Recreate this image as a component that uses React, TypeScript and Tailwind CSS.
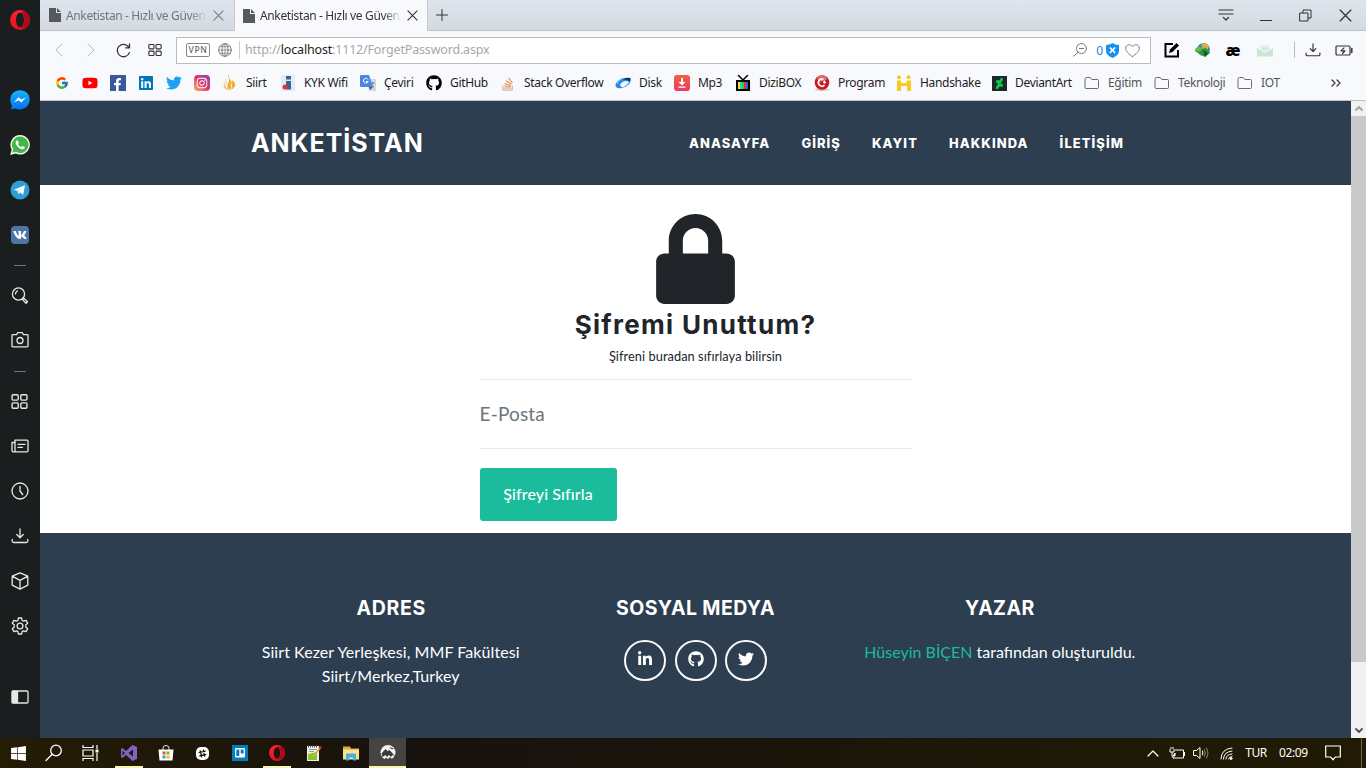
import type { ReactNode } from "react";
import { FcGoogle } from "react-icons/fc";
import {
  FaYoutube,
  FaFacebookF,
  FaTwitter,
  FaInstagram,
  FaGithub,
  FaLinkedinIn,
  FaLinkedin,
  FaLock,
  FaVk,
  FaDeviantart,
  FaWindows,
} from "react-icons/fa";

const stroke = { fill: "none", stroke: "currentColor", strokeLinecap: "round", strokeLinejoin: "round" } as const;

function OperaIcon({ className }: { className: string }) {
  return (
    <svg viewBox="0 0 20 20" className={className}>
      <defs>
        <linearGradient id="operaLeft" x1="0" y1="0" x2="0" y2="1">
          <stop offset="0" stopColor="#ff2338" />
          <stop offset="1" stopColor="#e0101f" />
        </linearGradient>
      </defs>
      <path fillRule="evenodd" fill="url(#operaLeft)" d="M10 0a10 10 0 1 0 0 20a10 10 0 0 0 0-20zm0 2.800c2.500 0 4 3.200 4 7.200s-1.500 7.200-4 7.200s-4-3.200-4-7.200s1.500-7.200 4-7.200z" />
      <path fill="#b0071c" d="M10.500 2.200c2-1 4-.9 6.200.4a10 10 0 0 1 0 14.800c-2.200 1.300-4.200 1.400-6.200.4c2.400-.5 3.800-3.600 3.800-7.800s-1.400-7.300-3.800-7.800z" />
    </svg>
  );
}

function GridIcon({ className, width = 1.3 }: { className: string; width?: number }) {
  return (
    <svg viewBox="0 0 16 16" className={className} {...stroke} strokeWidth={width}>
      <rect x="1" y="1.700" width="5.800" height="5" rx="1" />
      <rect x="9.200" y="1.700" width="5.800" height="5" rx="1" />
      <rect x="1" y="9.300" width="5.800" height="5" rx="1" />
      <rect x="9.200" y="9.300" width="5.800" height="5" rx="1" />
    </svg>
  );
}

function DownloadIcon({ className }: { className: string }) {
  return (
    <svg viewBox="0 0 18 18" className={className} {...stroke} strokeWidth="1.3">
      <path d="M9 2v8.500M5.800 7.500L9 10.700l3.200-3.200M1.200 12.500v1.500q0 1.500 1.500 1.500h12.600q1.500 0 1.500-1.500v-1.500" />
    </svg>
  );
}

function CloseIcon({ className }: { className: string }) {
  return (
    <svg viewBox="0 0 12 12" className={className} {...stroke} strokeWidth="1.200">
      <path d="M1 1l10 10M11 1L1 11" />
    </svg>
  );
}

function SideSlot({ children, className = "h-[45px]" }: { children: ReactNode; className?: string }) {
  return <div className={`flex w-full shrink-0 items-center justify-center ${className}`}>{children}</div>;
}

function Sidebar() {
  return (
    <aside className="flex w-10 shrink-0 flex-col bg-[#1b1e1f] text-[#e6e8e8]">
      <SideSlot className="h-10">
        <OperaIcon className="size-5" />
      </SideSlot>
      <div className="h-[37px] shrink-0" />
      <SideSlot>
        <svg viewBox="0 0 20 20" className="mr-px size-5">
          <defs>
            <linearGradient id="msg" x1="0" y1="0" x2="0" y2="1">
              <stop offset="0" stopColor="#14b3fb" />
              <stop offset="1" stopColor="#0571f5" />
            </linearGradient>
          </defs>
          <path fill="url(#msg)" d="M10 .3C4.400.3.300 4.300.300 9.600c0 3 .9 4.900 1.800 6.300L1 19.600l4-1.200c1.500.6 3.200 1 5 1c5.600 0 9.700-4.300 9.700-9.800S15.600.3 10 .3z" />
          <path fill="#fff" d="M3.800 12.400L8.500 7.300l2.500 2.300l5-2.200l-4.700 5.100l-2.500-2.300z" />
        </svg>
      </SideSlot>
      <SideSlot>
        <svg viewBox="0 0 20 20" className="size-5">
          <path fill="#f2f7f0" d="M10.200 0A9.800 9.800 0 0 0 1.700 14.700L.2 20l5.500-1.400A9.800 9.800 0 1 0 10.200 0z" />
          <path fill="#43b649" d="M10.200 1.600a8.200 8.200 0 0 0-6.900 12.700l-1 3.500l3.700-1A8.200 8.200 0 1 0 10.200 1.600z" />
          <path fill="#fff" d="M7.300 5.300c-.8 0-1.800 1.200-1.600 2.600c.4 2.600 3.500 5.800 6.400 6.400c1.600.2 2.800-.8 2.700-2.200l-2.300-1.200l-1.300 1.200c-1.500-.6-2.600-1.700-3.200-3.100l.9-1.200z" />
        </svg>
      </SideSlot>
      <SideSlot>
        <svg viewBox="0 0 20 20" className="size-5">
          <circle cx="10" cy="10" r="9.500" fill="#2f9fd3" />
          <path fill="#fff" d="M3.800 9.700L15 5.200l-1.800 9.500l-3.300-2.300l-1.700 1.800l-.5-3.200z" />
          <path fill="#b8d8e8" d="M7.700 11l5.500-4l-4.400 4.600l-.6 2.600z" />
        </svg>
      </SideSlot>
      <SideSlot>
        <div className="flex size-[18px] items-center justify-center rounded-[4px] bg-[#4d76a5]">
          <FaVk className="size-3.5 text-white" />
        </div>
      </SideSlot>
      <SideSlot className="h-4">
        <div className="h-px w-3 bg-[#727676]" />
      </SideSlot>
      <SideSlot>
        <svg viewBox="0 0 18 18" className="mt-px size-[18px]" {...stroke} strokeWidth="1.300">
          <circle cx="7.500" cy="7" r="6.100" />
          <path d="M4.500 7q0-2.500 2-3.200M11.500 12.600l1.300-1.300l3.700 3.400l-1.500 1.600z" />
        </svg>
      </SideSlot>
      <SideSlot className="h-11">
        <svg viewBox="0 0 18 18" className="size-[18px]" {...stroke} strokeWidth="1.300">
          <path d="M1 4.500q0-.8.800-.8h3.800l1-2h4.800l1 2h3.800q.8 0 .8.800V15q0 .8-.8.800H1.800Q1 15.800 1 15z" />
          <circle cx="9" cy="9.500" r="3" />
        </svg>
      </SideSlot>
      <SideSlot className="h-4">
        <div className="mt-[3px] h-px w-3 bg-[#727676]" />
      </SideSlot>
      <SideSlot>
        <GridIcon className="mt-px mr-px size-[17px]" />
      </SideSlot>
      <SideSlot>
        <svg viewBox="0 0 18 18" className="size-[18px]" {...stroke} strokeWidth="1.300">
          <path d="M4 14.800V3.200h12q1 0 1 1v9.600q0 1-1 1H2.200q-1.200 0-1.200-1.200V5.500h2.500M7 7.300h7M7 10.300h4.500" />
        </svg>
      </SideSlot>
      <SideSlot>
        <svg viewBox="0 0 18 18" className="size-[18px]" {...stroke} strokeWidth="1.300">
          <circle cx="9" cy="9" r="8" />
          <path d="M9 4.300V9l2.700 3.500" />
        </svg>
      </SideSlot>
      <SideSlot>
        <DownloadIcon className="size-[18px]" />
      </SideSlot>
      <SideSlot>
        <svg viewBox="0 0 18 18" className="size-[18px]" {...stroke} strokeWidth="1.300">
          <path d="M9 .8l7.800 3.400v9L9 17.200l-7.800-4v-9zM1.200 4.200L9 8.300l7.800-4.100M9 8.300v8.900" />
        </svg>
      </SideSlot>
      <SideSlot>
        <svg viewBox="0 0 18 18" className="size-[18px]" {...stroke} strokeWidth="1.300">
          <path d="M7.300 1h3.400l.4 2.400l1.500.8l2.400-.9l1.700 2.900l-1.900 1.600v2.400l1.900 1.600l-1.700 2.900l-2.400-.9l-1.500.8l-.4 2.400H7.300l-.4-2.400l-1.500-.8l-2.400.9l-1.700-2.900l1.900-1.600V7.800L1.300 6.200L3 3.300l2.400.9l1.500-.8z" />
          <circle cx="9" cy="9" r="2.900" />
        </svg>
      </SideSlot>
      <div className="h-[26px] shrink-0" />
      <SideSlot>
        <svg viewBox="0 0 18 18" className="size-[18px]" {...stroke} strokeWidth="1.300">
          <rect x="1" y="3" width="16" height="12" rx="1" />
          <path d="M1.500 3.500h5v11h-5z" fill="currentColor" />
        </svg>
      </SideSlot>
    </aside>
  );
}

function PageIcon() {
  return (
    <svg viewBox="0 0 12 14" className="h-3.5 w-3 shrink-0" fill="#58595d">
      <path d="M0 0h7v5h5v9H0z" />
      <path d="M8 0l4 4H8z" />
    </svg>
  );
}

function Tab({ active, className }: { active?: boolean; className: string }) {
  return (
    <div className={`flex shrink-0 items-center ${className}`}>
      <PageIcon />
      <div className={`mt-px ml-[5px] w-[141px] overflow-hidden text-[12px] tracking-[-0.360px] whitespace-nowrap ${active ? "text-[#333]" : "text-[#707580]"} [mask-image:linear-gradient(to_right,black_88%,transparent)]`}>
        Anketistan - Hızlı ve Güven
      </div>
      <CloseIcon className={`ml-auto size-[11px] ${active ? "text-[#333]" : "text-[#777c85]"}`} />
    </div>
  );
}

function TabBar() {
  return (
    <div className="flex h-[31px] shrink-0 bg-linear-to-b from-[#dfe5ed] to-[#d3d9e1]">
      <Tab className="w-[194px] border-b border-[#bfc4ca] pr-[10px] pl-[9px]" />
      <Tab active className="w-[194px] border-x border-[#c5c9ce] bg-[#f7f9fc] pr-[9px] pl-2" />
      <div className="flex flex-1 items-center border-b border-[#bfc4ca] pl-[8px] text-[#333]">
        <svg viewBox="0 0 12 12" className="size-3" {...stroke}>
          <path d="M6 .5v11M.5 6h11" />
        </svg>
        <svg viewBox="0 0 16 14" className="ml-auto h-3.5 w-4" {...stroke} strokeWidth="1.200">
          <path d="M1 2h14M1 6h14M5.500 9.500L8 12l2.500-2.500" />
        </svg>
        <svg viewBox="0 0 12 12" className="ml-[26px] size-3" {...stroke} strokeWidth="1.200">
          <path d="M.500 11.500h11" />
        </svg>
        <svg viewBox="0 0 13 13" className="ml-[27px] size-[13px]" {...stroke}>
          <path d="M1 4h8v8H1zM4 4V1h8v8H9" />
        </svg>
        <CloseIcon className="mr-[14px] ml-[27px] size-[13px]" />
      </div>
    </div>
  );
}

function AddressBar() {
  return (
    <div className="flex h-[38px] shrink-0 items-center bg-[#f7f9fc] text-[#333]">
      <svg viewBox="0 0 8 14" className="ml-[15px] h-3.5 w-2 text-[#b6b9bd]" {...stroke}>
        <path d="M7 1L1 7l6 6" />
      </svg>
      <svg viewBox="0 0 8 14" className="ml-6 h-3.5 w-2 text-[#b6b9bd]" {...stroke}>
        <path d="M1 1l6 6l-6 6" />
      </svg>
      <svg viewBox="0 0 14 14" className="ml-[21px] size-[15px]" {...stroke} strokeWidth="1.200">
        <path d="M12.500 9a5.800 5.800 0 1 1-.6-5.200M12.600.8v3.700H9" />
      </svg>
      <GridIcon className="ml-[17px] size-[14px]" width={1.3} />
      <div className="ml-[14px] flex h-[27px] w-[975px] items-center border border-[#b9bcc0] bg-white">
        <span className="ml-[9px] flex h-[14px] w-6 items-center justify-center rounded-[2px] border border-[#888] text-[8.500px] leading-none font-medium tracking-[0.600px] text-[#666]">VPN</span>
        <svg viewBox="0 0 14 14" className="ml-2 size-[14px] text-[#808080]" {...stroke}>
          <circle cx="7" cy="7" r="6.300" />
          <ellipse cx="7" cy="7" rx="3" ry="6.300" />
          <path d="M.7 7h12.600M1.500 3.700h11M1.500 10.300h11M7 .7v12.600" strokeWidth=".8" />
        </svg>
        <span className="ml-[7px] h-[18px] w-px bg-[#ccc]" />
        <span className="mt-px ml-[5px] text-[12.500px] tracking-[-0.180px] whitespace-nowrap text-[#a6a8ab]">
          http://<span className="text-[#222]">localhost</span>:1112/ForgetPassword.aspx
        </span>
        <svg viewBox="0 0 14 14" className="ml-auto size-[14px] text-[#777]" {...stroke}>
          <circle cx="8.500" cy="5.500" r="5" />
          <path d="M5 9.200l-4.300 4M6.300 5.500h4.400" />
        </svg>
        <span className="mt-px ml-[9px] text-[12px] text-[#1b82dd]">0</span>
        <svg viewBox="0 0 13 15" className="ml-[3px] h-[15px] w-[13px]">
          <path fill="#1592ee" d="M0 2q4 0 6.500-2Q9 2 13 2v6q0 4-6.500 7Q0 12 0 8z" />
          <path d="M3.800 4.500l5.400 5.400M9.200 4.500L3.800 9.900" stroke="#fff" strokeWidth="1.500" />
        </svg>
        <svg viewBox="0 0 16 14" className="mr-[10px] ml-[6px] h-[15px] w-[15px] text-[#777]" {...stroke}>
          <path d="M8 13.500C4 10.500.7 7.800.7 4.500C.7 1 5.500-.8 8 3C10.500-.8 15.300 1 15.300 4.500C15.300 7.800 12 10.500 8 13.500z" />
        </svg>
      </div>
      <svg viewBox="0 0 16 16" className="ml-[13px] size-4 text-black" fill="none" stroke="currentColor" strokeWidth="2">
        <path d="M9 2H1.500v12.500H14V8" />
        <path d="M5 11l1-3.500L12.500 1L15 3.500L8.500 10z" fill="currentColor" stroke="none" />
      </svg>
      <svg viewBox="0 0 16 16" className="ml-[15px] size-4">
        <circle cx="8.500" cy="7.500" r="6.500" fill="#3b83bf" />
        <path d="M6 2q5-2.500 8 3l-2 3l-4-1z" fill="#e2b03c" />
        <path d="M0 9q5-6 8-1l2-3l5 6l-5 4z" fill="#2d9636" />
        <path d="M0 7q4-4 7-1l-2 4q-3-2-5 0z" fill="#70b847" />
        <path d="M8 8l5 3l-3 4z" fill="#155c1b" />
      </svg>
      <span className="ml-[14px] w-4 text-center font-['Open_Sans',sans-serif] text-[16px] leading-[15px] font-extrabold text-black">æ</span>
      <svg viewBox="0 0 16 14" className="ml-[16px] h-3.5 w-4">
        <path fill="#c5e7d4" d="M0 5l8 5l8-5v8.500H0z" />
        <path fill="#eaf2ee" d="M3 2h10v5l-5 3l-5-3z" />
        <path d="M5 4l2 3l2-3l2 3" stroke="#ccd2d0" fill="none" />
      </svg>
      <span className="ml-[21px] h-4 w-px bg-[#b9bcc0]" />
      <DownloadIcon className="ml-[10px] size-4" />
      <svg viewBox="0 0 18 11" className="ml-[14px] h-[11px] w-[18px]" {...stroke} strokeWidth="1.200">
        <rect x="1" y="1" width="14" height="9" rx="1" />
        <path d="M16.800 3.500v4" strokeWidth="1.500" />
        <path d="M9 2.800L6 5.800h4L7.500 8.500" />
      </svg>
    </div>
  );
}

function Folder() {
  return (
    <svg viewBox="0 0 16 14" className="h-3.5 w-4 text-[#6b6b6b]" {...stroke}>
      <path d="M1 3q0-1.500 1.500-1.500h3.700l1.600 2h5.700q1 0 1 1v7q0 1-1 1H2q-1 0-1-1z" />
    </svg>
  );
}

function Bookmark({ icon, label, className = "w-7", muted }: { icon: ReactNode; label?: string; className?: string; muted?: boolean }) {
  return (
    <div className={`flex shrink-0 items-center gap-2 ${className}`}>
      <div className="flex size-4 shrink-0 items-center justify-center">{icon}</div>
      {label && <span className={`whitespace-nowrap ${muted ? "text-[#555]" : "text-[#1d1d1d]"}`}>{label}</span>}
    </div>
  );
}

function BookmarksBar() {
  return (
    <div className="flex h-[32px] shrink-0 items-center border-b border-[#bfc4ca] bg-[#f7f9fc] pb-[3px] pl-[14px] text-[12px] tracking-[-0.320px]">
      <Bookmark icon={<FcGoogle className="mr-px size-[14px]" />} />
      <Bookmark icon={<FaYoutube className="size-[16px] text-[#f00]" />} />
      <Bookmark icon={<span className="flex size-4 items-end justify-end bg-[#3b5998] pr-0.5"><FaFacebookF className="size-[13px] text-white" /></span>} />
      <Bookmark icon={<FaLinkedin className="size-4 text-[#0077b5]" />} />
      <Bookmark icon={<FaTwitter className="size-4 text-[#1da1f2]" />} />
      <Bookmark icon={<span className="flex size-4 items-center justify-center rounded-[4px] bg-linear-to-tr from-[#fcb045] via-[#e1306c] to-[#833ab4]"><FaInstagram className="size-3 text-white" /></span>} />
      <Bookmark className="w-[58px]" label="Siirt" icon={
        <svg viewBox="0 0 14 16" className="h-4 w-3.5">
          <path fill="#f4ad2e" d="M6 0q-.5 3 1.500 5t.500 5q2-2 1-5q4 3 3 6q-2 4-6 4q-3-3-1-6.500q2-3.500 0-8.500z" />
          <path fill="#eebf6c" d="M1.500 6q-.5 6 4.500 9q-4.500 0-5.500-4zM3.500 3q-1 3 .7 6.500q-3-2-.7-6.500z" />
          <path d="M7 15q3-2 1-6" stroke="#fbf3df" fill="none" />
        </svg>
      } />
      <Bookmark className="w-20" label="KYK Wifi" icon={
        <svg viewBox="0 0 16 16" className="size-4">
          <path fill="#e6e9ee" d="M1 0h14v16H1z" />
          <path fill="#376496" d="M6 1h5v3.500H6zM6 6h5v8.500H6z" />
          <circle cx="5" cy="12" r="2.500" fill="#dc3540" />
        </svg>
      } />
      <Bookmark className="w-[66px]" label="Çeviri" icon={
        <svg viewBox="0 0 16 16" className="size-4">
          <path fill="#d4d7dc" d="M6 4h9q1 0 1 1v11H9z" />
          <path fill="#4a86e8" d="M1 0h8l4 12H1q-1 0-1-1V1q0-1 1-1z" />
          <path d="M8 4.500A2.400 2.400 0 1 0 8.200 6.500H6" stroke="#fff" fill="none" />
          <path d="M10 8h5M12.500 7v1q0 2-2.500 4M11 9q1 2 3 3" stroke="#6f87a5" fill="none" />
          <path fill="#3257b5" d="M9 12h4l-3 3z" />
        </svg>
      } />
      <Bookmark className="w-[74px]" label="GitHub" icon={<FaGithub className="size-4 text-black" />} />
      <Bookmark className="w-[115px]" label="Stack Overflow" icon={
        <svg viewBox="0 0 14 16" className="h-[15px] w-3.5" fill="none">
          <path d="M1.500 10v5h10v-5" stroke="#aaa" />
          <path d="M3 12.700h7M3 10.500l7 .7M3.500 8l6.700 1.900M4.800 5l6 3.500M7.500 2l4.200 5.200" stroke="#f18a3c" strokeWidth="1.100" />
        </svg>
      } />
      <Bookmark className="w-[59px]" label="Disk" icon={
        <svg viewBox="0 0 16 12" className="h-3 w-4">
          <ellipse cx="8" cy="6" rx="8" ry="4.500" transform="rotate(-25 8 6)" fill="#2a86ea" />
          <path fill="#0f2f62" d="M8 2.500q4-2.500 7.500-1.500q.5 2-1 3.500q-2-2.500-6.500-2z" />
          <path fill="#f3f8fd" d="M5 8q2-4 6-4q3 0 3 1.500q-2 3-6 5q-2 0-3-2.500z" />
          <path fill="#8cc4fb" d="M1.500 6q2-4 7-5q-4 2-6 6z" />
        </svg>
      } />
      <Bookmark className="w-[61px]" label="Mp3" icon={
        <svg viewBox="0 0 16 16" className="size-4">
          <defs>
            <linearGradient id="mp3" x1="0" y1="0" x2="0" y2="1">
              <stop offset="0" stopColor="#f5603f" />
              <stop offset="1" stopColor="#e83a66" />
            </linearGradient>
          </defs>
          <rect width="16" height="16" rx="3" fill="url(#mp3)" />
          <path fill="#fff" d="M7 3h2v4h2.500L8 10.500L4.500 7H7zM4.500 11.500h7v1.300h-7z" />
        </svg>
      } />
      <Bookmark className="w-[79px]" label="DiziBOX" icon={
        <svg viewBox="0 0 16 16" className="size-4">
          <path d="M3 0l5 5l5-5" stroke="#000" strokeWidth="1.500" fill="none" />
          <path d="M1 5h14v11H1z" />
          <path fill="#f4e72e" d="M3 7h2v7H3z" />
          <path fill="#2bd1c0" d="M5 7h2v7H5z" />
          <path fill="#2bd13b" d="M7 7h2v7H7z" />
          <path fill="#e83030" d="M9 7h2v7H9z" />
          <path fill="#2f5df0" d="M11 7h2v7h-2z" />
        </svg>
      } />
      <Bookmark className="w-[82px]" label="Program" icon={
        <svg viewBox="0 0 16 16" className="size-4">
          <ellipse cx="8" cy="14.500" rx="7" ry="1.500" fill="#c5c5c5" />
          <circle cx="8" cy="7.500" r="7.300" fill="#c8191e" />
          <ellipse cx="8" cy="3.500" rx="5" ry="3" fill="#e06a6c" />
          <path d="M9.500 4.500A3.500 3.500 0 1 0 10.500 10" stroke="#fff" strokeWidth="1.700" fill="none" />
          <path d="M9 7.300h3M10.500 5.800v3" stroke="#fff" strokeWidth="1.200" />
        </svg>
      } />
      <Bookmark className="w-[95px]" label="Handshake" icon={
        <svg viewBox="0 0 16 16" className="size-4" fill="#f7cb1b">
          <circle cx="3" cy="2.200" r="2" />
          <circle cx="12.500" cy="2.200" r="2" />
          <path d="M1 5.500h4V8h5.500V5.500H15V16h-3.800v-5H5v5H1z" />
        </svg>
      } />
      <Bookmark className="w-[93px]" label="DeviantArt" icon={<span className="flex size-[15px] items-center justify-center bg-[#20272b]"><FaDeviantart className="size-[11px] text-[#05cc47]" /></span>} />
      <Bookmark muted className="w-[70px]" label="Eğitim" icon={<Folder />} />
      <Bookmark muted className="w-[83px]" label="Teknoloji" icon={<Folder />} />
      <Bookmark muted className="w-[60px]" label="IOT" icon={<Folder />} />
      <svg viewBox="0 0 10 8" className="mr-[25px] ml-auto h-2 w-2.5 text-[#333]" {...stroke} strokeWidth="1.200">
        <path d="M1 1l3 3l-3 3M6 1l3 3l-3 3" />
      </svg>
    </div>
  );
}

const social = [FaLinkedinIn, FaGithub, FaTwitter];

function SitePage() {
  return (
    <div className="flex min-w-0 flex-1 flex-col font-[Lato,sans-serif]">
      <header className="flex h-[84px] shrink-0 items-center justify-between bg-[#2c3e50] pt-[2px] pr-[227px] pl-[211px] font-[Inter,sans-serif] font-bold text-white">
        <span className="text-[25px] tracking-[0.950px] whitespace-nowrap">ANKETİSTAN</span>
        <nav className="flex gap-[31px] text-[12.900px] font-extrabold tracking-[1.100px] whitespace-nowrap">
          <a>ANASAYFA</a>
          <a>GİRİŞ</a>
          <a>KAYIT</a>
          <a>HAKKINDA</a>
          <a>İLETİŞİM</a>
        </nav>
      </header>
      <main className="flex h-[348px] shrink-0 flex-col items-center bg-white pt-[29px] text-[#212529]">
        <FaLock className="h-[90px] w-[79px]" />
        <h1 className="mt-[5px] font-[Inter,sans-serif] text-[26px] leading-[31px] font-bold tracking-[1.300px] whitespace-nowrap">Şifremi Unuttum?</h1>
        <p className="mt-[6px] text-[12.800px] leading-5 tracking-[0.060px] whitespace-nowrap">Şifreni buradan sıfırlaya bilirsin</p>
        <form className="mt-[13px] flex w-[432px] flex-col items-start">
          <div className="flex h-[70px] w-full items-center border-y border-[#e9ecef] text-[19px] tracking-[0.180px] text-[#6c757d]">E-Posta</div>
          <button type="button" className="mt-[19px] h-[53px] w-[137px] rounded-[3px] bg-[#1abc9c] pb-[2px] text-base font-medium tracking-[0.100px] whitespace-nowrap text-white">Şifreyi Sıfırla</button>
        </form>
      </main>
      <footer className="grid flex-1 grid-cols-3 content-start bg-[#2c3e50] px-[199px] pt-[62px] text-center text-base leading-6 text-white">
        <section>
          <h4 className="mb-[19px] font-[Inter,sans-serif] text-[19.500px] leading-[26px] font-bold tracking-[0.700px]">ADRES</h4>
          <p className="pr-px tracking-[0.070px]">
            Siirt Kezer Yerleşkesi, MMF Fakültesi
            <br />
            Siirt/Merkez,Turkey
          </p>
        </section>
        <section>
          <h4 className="mb-[19px] font-[Inter,sans-serif] text-[19.500px] leading-[26px] font-bold tracking-[0.400px] whitespace-nowrap">SOSYAL MEDYA</h4>
          <div className="flex justify-center gap-[8.500px] pl-px">
            {social.map((Icon, i) => (
              <a key={i} className="flex h-[41px] w-[42px] items-center justify-center rounded-full border-2 border-[#f8f9fa] pb-[3px]">
                <Icon className="size-4" />
              </a>
            ))}
          </div>
        </section>
        <section>
          <h4 className="mb-[19px] font-[Inter,sans-serif] text-[19.500px] leading-[26px] font-bold tracking-[0.400px]">YAZAR</h4>
          <p className="whitespace-nowrap">
            <a className="text-[#1abc9c]">Hüseyin BİÇEN</a> tarafından oluşturuldu.
          </p>
        </section>
      </footer>
    </div>
  );
}

function Scrollbar() {
  return (
    <div className="flex w-[15px] shrink-0 flex-col items-center bg-[#f1f1f1]">
      <div className="flex h-[15px] items-center">
        <svg viewBox="0 0 8 5" className="h-[5px] w-2 text-[#a3a3a3]" {...stroke} strokeWidth="1.800">
          <path d="M1 4l3-3l3 3" />
        </svg>
      </div>
      <div className="h-[546px] w-full bg-[#c9c9c9]" />
      <div className="mt-auto flex h-[15px] items-center">
        <svg viewBox="0 0 8 5" className="h-[5px] w-2 text-[#505050]" {...stroke} strokeWidth="1.800">
          <path d="M1 1l3 3l3-3" />
        </svg>
      </div>
    </div>
  );
}

function TaskSlot({ children, running, active, className = "w-[37px]" }: { children: ReactNode; running?: boolean; active?: boolean; className?: string }) {
  return (
    <div className={`relative flex h-full shrink-0 items-center justify-center ${active ? "bg-[#454443]" : ""} ${className}`}>
      {children}
      {running && <span className="absolute bottom-0 h-0.5 w-7 bg-[#faf3a8]" />}
      {active && <span className="absolute bottom-0 h-0.5 w-full bg-[#faf3a8]" />}
    </div>
  );
}

function Taskbar() {
  return (
    <div className="flex h-[30px] shrink-0 items-center bg-linear-to-r from-[#241c05] via-[#17120d] via-30% to-[#211b04] text-white">
      <TaskSlot className="w-9">
        <FaWindows className="size-[17px]" />
      </TaskSlot>
      <TaskSlot className="w-9">
        <svg viewBox="0 0 18 18" className="size-[18px]" {...stroke} strokeWidth="1.300">
          <circle cx="11" cy="6.500" r="5.300" />
          <path d="M7.200 10.300L1 16.500" />
        </svg>
      </TaskSlot>
      <TaskSlot className="w-[38px]">
        <svg viewBox="0 0 17 16" className="mr-0.5 h-4 w-[17px]" fill="none" stroke="currentColor" strokeWidth="1.200">
          <path d="M1 0v2.500h10V0M1 5h10v6H1zM1 16v-2.500h10V16M15 0v4M15 8v8" />
          <path d="M13.500 4.500h3v3h-3z" fill="currentColor" stroke="none" />
        </svg>
      </TaskSlot>
      <TaskSlot running>
        <svg viewBox="0 0 16 16" className="size-4">
          <path fill="#8661c5" fillRule="evenodd" d="M11.500 0L16 2v12l-4.500 2L5 10l-3.500 3L0 12V4l1.500-1L5 6zM12 4.500L7.500 8l4.500 3.500zM1.500 5.500v5L4 8z" />
        </svg>
      </TaskSlot>
      <TaskSlot>
        <svg viewBox="0 0 16 16" className="size-4">
          <path d="M5 5V3q0-2.500 3-2.500T11 3v2" stroke="#ddd" fill="none" />
          <path fill="#fff" d="M.5 4.500h15l-1 11h-13z" />
          <path fill="#e8502b" d="M4.500 6.500h3v3h-3z" />
          <path fill="#74b93c" d="M8.500 6.500h3v3h-3z" />
          <path fill="#2da3e0" d="M4.500 10.500h3v3h-3z" />
          <path fill="#f4b72c" d="M8.500 10.500h3v3h-3z" />
        </svg>
      </TaskSlot>
      <TaskSlot>
        <span className="flex size-[13px] items-center justify-center rounded-[5px] bg-white">
          <svg viewBox="0 0 10 10" className="size-[9px] -rotate-12" stroke="#201b10" strokeWidth="1.400">
            <path d="M3.200 1v8M6.800 1v8M1 3.200h8M1 6.800h8" />
          </svg>
        </span>
      </TaskSlot>
      <TaskSlot>
        <svg viewBox="0 0 16 16" className="size-4">
          <path fill="#0779bf" d="M0 0h16v16H0z" />
          <rect x="3" y="3" width="10" height="9.500" rx="1" fill="#fff" />
          <path fill="#0779bf" d="M4.300 4.500h3V11h-3zM8.700 4.500h3v4h-3z" />
        </svg>
      </TaskSlot>
      <TaskSlot running>
        <OperaIcon className="size-4" />
      </TaskSlot>
      <TaskSlot>
        <svg viewBox="0 0 16 16" className="size-4">
          <path fill="#eee" d="M1 1h12v15H1z" />
          <path d="M2 1.500h10" stroke="#555" strokeWidth="2" strokeDasharray="1 1" />
          <path d="M3 4.500h8M3 6.500h5" stroke="#999" />
          <path fill="#82c82c" d="M2 9l9-2v8H2z" />
          <path d="M7 12L14.500 2.500" stroke="#e9a73a" strokeWidth="1.800" />
          <path d="M13.500 3.700l1.500-2" stroke="#c8352a" strokeWidth="2" />
        </svg>
      </TaskSlot>
      <TaskSlot>
        <svg viewBox="0 0 16 14" className="h-[15px] w-4">
          <path fill="#e2a93b" d="M0 0h7l1 2h8v4H0z" />
          <path fill="#fbe08c" d="M0 3h16v10H0z" />
          <path fill="#45b0e0" d="M3 14V8q0-1 1-1h8q1 0 1 1v6h-3v-3H6v3z" />
        </svg>
      </TaskSlot>
      <TaskSlot active>
        <svg viewBox="0 0 16 16" className="size-4">
          <circle cx="8" cy="7.500" r="7.500" fill="#f4f4f4" />
          <path fill="#3a3a39" d="M1.500 8.500l4-4.500l2 2l2-1l5.500 6l-2.500-1l-1.500 2l-2-2l-2 2l-1.500-2l-3 2zM9 3q3-1.500 5 1.500l-2-.5z" />
          <path fill="#454443" d="M3 16l3-3.500l2 1.500l2-2l4 4z" />
        </svg>
      </TaskSlot>
      <div className="ml-auto flex h-full items-center text-[12px] tracking-[-0.400px]">
        <svg viewBox="0 0 12 7" className="h-[7px] w-3" {...stroke} strokeWidth="1.200">
          <path d="M1 6l5-5l5 5" />
        </svg>
        <svg viewBox="0 0 16 12" className="ml-[10px] h-3 w-4" fill="none" stroke="currentColor">
          <path d="M6 3h8.500v8H4M15.500 5v4M1 2v3h4V2M2 0v2M4 0v2M3 5v3q0 3 2 3" />
          <path d="M6 9V6l-2 3z" fill="currentColor" />
        </svg>
        <svg viewBox="0 0 16 14" className="ml-2 h-3.5 w-4" {...stroke}>
          <path d="M1 4.500h2.500L7 1.500v11l-3.500-3H1z" />
          <path d="M9.500 5q1 2 0 4" />
          <path d="M11.500 3.500q2 3.500 0 7M13.500 2q3 5 0 10" stroke="#8a8778" />
        </svg>
        <svg viewBox="0 0 13 13" className="ml-[11px] size-[13px]" {...stroke}>
          <path d="M1 12Q1 2 12 1M3.500 12Q3.500 5 12 4M6 12Q6 7.500 12 7M8.500 12q0-2 3.500-2.500" />
          <circle cx="11" cy="11.500" r="1" fill="currentColor" />
        </svg>
        <span className="ml-3 w-[22px] text-center">TUR</span>
        <span className="ml-3 w-7 text-center">02:09</span>
        <svg viewBox="0 0 16 16" className="mr-5 ml-[18px] size-4" fill="none" stroke="currentColor" strokeWidth="1.200">
          <path d="M.7 1h14.600v11h-5L8 14.700L5.700 12h-5z" />
        </svg>
        <span className="mr-1 h-full w-px bg-[#6b6753]" />
      </div>
    </div>
  );
}

export default function App() {
  return (
    <div className="flex h-[768px] w-[1366px] flex-col overflow-hidden font-['Noto_Sans',sans-serif]">
      <div className="flex h-[738px] shrink-0">
        <Sidebar />
        <div className="flex min-w-0 flex-1 flex-col">
          <TabBar />
          <AddressBar />
          <BookmarksBar />
          <div className="flex min-h-0 flex-1">
            <SitePage />
            <Scrollbar />
          </div>
        </div>
      </div>
      <Taskbar />
    </div>
  );
}
